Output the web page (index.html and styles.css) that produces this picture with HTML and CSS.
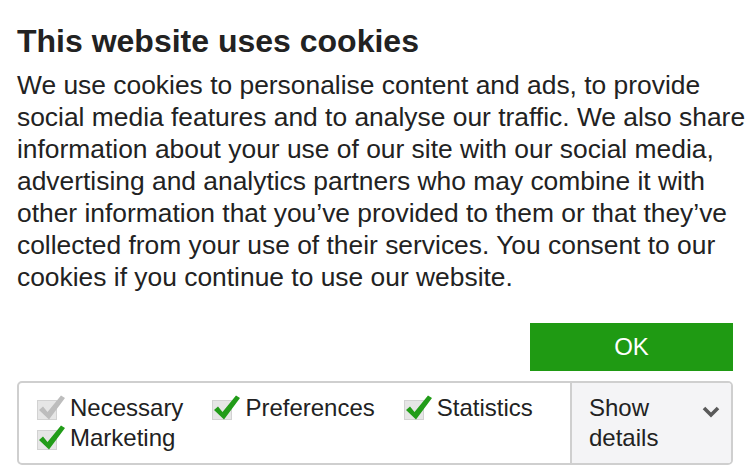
FILE: index.html
```html
<!DOCTYPE html>
<html lang="en">
<head>
<meta charset="utf-8">
<title>Cookies</title>
<link rel="stylesheet" href="styles.css">
</head>
<body>
<div class="dialog">
  <h1 class="title">This website uses cookies</h1>
  <p class="text">We use cookies to personalise content and ads, to provide social media features and to analyse our traffic. We also share information about your use of our site with our social media, advertising and analytics partners who may combine it with other information that you’ve provided to them or that they’ve collected from your use of their services. You consent to our cookies if you continue to use our website.</p>
  <div class="actions">
    <button class="ok">OK</button>
  </div>
  <div class="panel">
    <div class="options">
      <label class="option">
        <svg class="check" width="28" height="26" viewBox="0 0 28 26"><rect x="0.5" y="5.5" width="19" height="19" class="box"/><path class="mark disabled" d="M2 15 L6 11.5 L10.5 17 L24 0.5 L28 3 L12 24.5 Z"/></svg>
        <span>Necessary</span>
      </label>
      <label class="option">
        <svg class="check" width="28" height="26" viewBox="0 0 28 26"><rect x="0.5" y="5.5" width="19" height="19" class="box"/><path class="mark" d="M2 15 L6 11.5 L10.5 17 L24 0.5 L28 3 L12 24.5 Z"/></svg>
        <span>Preferences</span>
      </label>
      <label class="option">
        <svg class="check" width="28" height="26" viewBox="0 0 28 26"><rect x="0.5" y="5.5" width="19" height="19" class="box"/><path class="mark" d="M2 15 L6 11.5 L10.5 17 L24 0.5 L28 3 L12 24.5 Z"/></svg>
        <span>Statistics</span>
      </label>
      <label class="option">
        <svg class="check" width="28" height="26" viewBox="0 0 28 26"><rect x="0.5" y="5.5" width="19" height="19" class="box"/><path class="mark" d="M2 15 L6 11.5 L10.5 17 L24 0.5 L28 3 L12 24.5 Z"/></svg>
        <span>Marketing</span>
      </label>
    </div>
    <div class="details">
      <span class="details-text">Show details</span>
      <svg class="chevron" width="18" height="12" viewBox="0 0 18 12"><path d="M2 2 L9 9 L16 2" fill="none" stroke="#5a5a5a" stroke-width="3.6" stroke-linecap="butt" stroke-linejoin="miter"/></svg>
    </div>
  </div>
</div>
</body>
</html>
```

FILE: styles.css
```css
* { box-sizing: border-box; }

html, body {
  margin: 0;
  padding: 0;
  background: #ffffff;
}

body {
  font-family: "Liberation Sans", Arial, Helvetica, sans-serif;
  color: #222222;
  overflow: hidden;
}

.dialog {
  padding: 22px 17px 0 17px;
}

.title {
  margin: 0;
  font-size: 32px;
  line-height: 38px;
  font-weight: 700;
  color: #222222;
}

.text {
  margin: 9px -17px 0 0;
  font-size: 26.4px;
  line-height: 32px;
  color: #222222;
}

.actions {
  display: flex;
  justify-content: flex-end;
  margin-top: 30px;
}

.ok {
  width: 203px;
  height: 48px;
  border: 0;
  padding: 0;
  background: #1f9a13;
  color: #ffffff;
  font-family: "Liberation Sans", Arial, Helvetica, sans-serif;
  font-size: 24px;
  line-height: 48px;
}

.panel {
  display: flex;
  margin-top: 10px;
  border: 2px solid #cfcfcf;
  border-radius: 5px;
  overflow: hidden;
  font-size: 24px;
  line-height: 30px;
}

.options {
  flex: 1;
  display: flex;
  flex-wrap: wrap;
  column-gap: 29px;
  padding: 10px 10px 10px 18px;
}

.option {
  display: inline-flex;
  align-items: center;
  height: 30px;
}

.check {
  overflow: visible;
  margin-right: 5px;
  margin-top: -1px;
}

.box {
  fill: #e6e6e6;
  stroke: #d2d2d2;
  stroke-width: 1;
}

.mark {
  fill: #229c19;
}

.mark.disabled {
  fill: #bdbdbd;
}

.details {
  width: 161px;
  display: flex;
  align-items: flex-start;
  justify-content: space-between;
  background: #f4f4f6;
  border-left: 2px solid #cfcfcf;
  padding: 10px 11px 10px 17px;
}

.details-text {
  width: 90px;
}

.chevron {
  margin-top: 13px;
}
```
